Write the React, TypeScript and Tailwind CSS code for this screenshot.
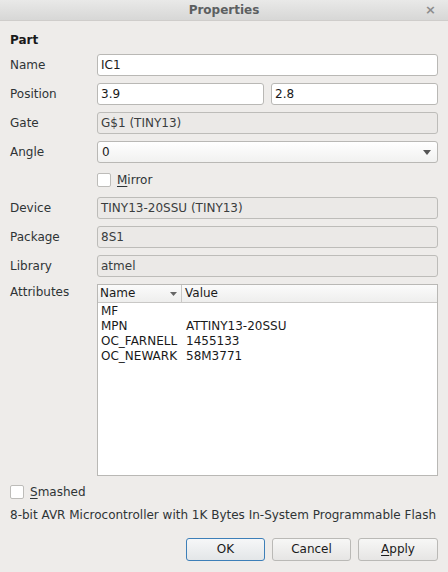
import React from "react";

const font = { fontFamily: '"DejaVu Sans", sans-serif' };

function Field({ value, disabled }: { value: string; disabled?: boolean }) {
  return (
    <div
      className={`h-[22px] flex items-center px-[3px] rounded-[3px] border ${
        disabled ? "bg-[#ebe9e7] border-[#bdbcb9] text-[#3a3d3e]" : "bg-white border-[#b9b8b5] text-[#1a1a1a]"
      }`}
    >
      {value}
    </div>
  );
}

function Row({ label, children }: { label: string; children: React.ReactNode }) {
  return (
    <div className="flex items-center">
      <div className="w-[87px] text-[#2e3436]">{label}</div>
      <div className="flex-1">{children}</div>
    </div>
  );
}

function Check({ label, ul }: { label: string; ul: string }) {
  return (
    <div className="flex items-center gap-[6px]">
      <div className="w-[14px] h-[14px] bg-white border border-[#bdbcb9] rounded-[2px]" />
      <span className="text-[#2e3436]">
        <span className="underline underline-offset-2">{ul}</span>
        {label}
      </span>
    </div>
  );
}

export default function App() {
  const rows = [
    ["MF", ""],
    ["MPN", "ATTINY13-20SSU"],
    ["OC_FARNELL", "1455133"],
    ["OC_NEWARK", "58M3771"],
  ];
  return (
    <div className="w-[448px] h-[572px] bg-[#eeecea] text-[12px] leading-[15px] flex flex-col" style={font}>
      <div className="h-[21px] shrink-0 bg-gradient-to-b from-[#e9e9e8] to-[#d7d7d6] border-b border-[#cfcdcb] flex items-center justify-center relative">
        <span className="font-bold text-[#5c5f61]">Properties</span>
        <span className="absolute right-[12px] top-[2px] text-[#8c8c8c] text-[13px] font-bold">×</span>
      </div>
      <div className="px-[10px] flex flex-col">
        <div className="mt-[12px] h-[16px] font-bold text-[#1a1a1a]">Part</div>
        <div className="mt-[5px] flex flex-col gap-[7px]">
          <Row label="Name">
            <Field value="IC1" />
          </Row>
          <Row label="Position">
            <div className="flex gap-[7px]">
              <div className="flex-1">
                <Field value="3.9" />
              </div>
              <div className="flex-1">
                <Field value="2.8" />
              </div>
            </div>
          </Row>
          <Row label="Gate">
            <Field value="G$1 (TINY13)" disabled />
          </Row>
          <Row label="Angle">
            <div className="h-[22px] flex items-center justify-between px-[4px] rounded-[3px] border border-[#b9b8b5] bg-gradient-to-b from-[#ffffff] to-[#f1f1f0] text-[#1a1a1a]">
              <span>0</span>
              <svg width="8" height="5" viewBox="0 0 8 5" className="mr-[2px]">
                <path d="M0 0 L8 0 L4 5 Z" fill="#555" />
              </svg>
            </div>
          </Row>
          <div className="h-[20px] flex items-center pl-[87px]">
            <Check ul="M" label="irror" />
          </div>
          <Row label="Device">
            <Field value="TINY13-20SSU (TINY13)" disabled />
          </Row>
          <Row label="Package">
            <Field value="8S1" disabled />
          </Row>
          <Row label="Library">
            <Field value="atmel" disabled />
          </Row>
          <div className="flex items-start">
            <div className="w-[87px] text-[#2e3436] pt-[1px]">Attributes</div>
            <div className="flex-1 h-[192px] border border-[#b9b8b5] bg-white flex flex-col">
              <div className="h-[18px] shrink-0 flex items-center bg-gradient-to-b from-[#fbfbfb] to-[#eeeeed] border-b border-[#c9c8c6] text-[#1a1a1a]">
                <div className="w-[84px] pl-[2px] flex items-center justify-between pr-[4px] border-r border-[#c9c8c6] h-full">
                  <span>Name</span>
                  <svg width="7" height="4" viewBox="0 0 7 4">
                    <path d="M0 0 L7 0 L3.5 4 Z" fill="#666" />
                  </svg>
                </div>
                <span className="pl-[3px]">Value</span>
              </div>
              <div className="pt-[1px] text-[#1a1a1a]">
                {rows.map(([n, v]) => (
                  <div key={n} className="flex h-[15px] items-center">
                    <div className="w-[84px] pl-[3px]">{n}</div>
                    <div className="pl-[4px]">{v}</div>
                  </div>
                ))}
              </div>
            </div>
          </div>
        </div>
        <div className="mt-[6px] h-[20px] flex items-center">
          <Check ul="S" label="mashed" />
        </div>
        <div className="mt-[6px] h-[16px] text-[#2e3436]">
          8-bit AVR Microcontroller with 1K Bytes In-System Programmable Flash
        </div>
        <div className="mt-[14px] flex justify-end gap-[7px]">
          <button className="w-[79px] h-[23px] rounded-[3px] border border-[#3d7fb8] bg-gradient-to-b from-[#f6f7f8] to-[#e3e6e8] text-[#1a1a1a]">
            OK
          </button>
          <button className="w-[79px] h-[23px] rounded-[3px] border border-[#bab9b6] bg-gradient-to-b from-[#f7f7f6] to-[#e6e5e4] text-[#1a1a1a]">
            Cancel
          </button>
          <button className="w-[80px] h-[23px] rounded-[3px] border border-[#bab9b6] bg-gradient-to-b from-[#f7f7f6] to-[#e6e5e4] text-[#1a1a1a]">
            <span className="underline underline-offset-2">A</span>pply
          </button>
        </div>
      </div>
    </div>
  );
}
